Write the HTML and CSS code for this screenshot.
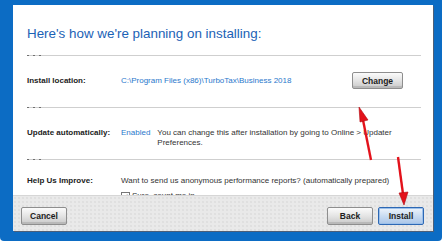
FILE: index.html
```html
<!DOCTYPE html>
<html lang="en">
<head>
	<meta charset="UTF-8">
	<title>TurboTax Install</title>
	<link rel="stylesheet" href="styles.css">
</head>
<body>
	<div class="frame">
		<div class="panel">
			<div class="content">
				<h1 class="title">Here's how we're planning on installing:</h1>
				<div class="row row-location">
					<span class="label">Install location:</span>
					<span class="link">C:\Program Files (x86)\TurboTax\Business 2018</span>
					<button class="btn btn-change">Change</button>
				</div>
				<div class="row row-update">
					<span class="label">Update automatically:</span>
					<div class="value">
						<span class="link">Enabled</span>
						<span class="desc">You can change this after installation by going to Online &gt; Updater Preferences.</span>
					</div>
				</div>
				<div class="row row-improve">
					<span class="label">Help Us Improve:</span>
					<div class="value-col">
						<span>Want to send us anonymous performance reports? (automatically prepared)</span>
						<label class="check"><span class="box">&#10003;</span>Sure, count me in</label>
					</div>
				</div>
			</div>
			<div class="footer">
				<button class="btn">Cancel</button>
				<button class="btn btn-back">Back</button>
				<button class="btn btn-primary">Install</button>
			</div>
		</div>
	</div>
	<svg class="arrows" width="442" height="246" viewBox="0 0 442 246">
		<g fill="#e3121b" stroke="#b00a10" stroke-width="0.6">
			<line x1="371" y1="160" x2="363" y2="120" stroke="#e3121b" stroke-width="2.4"/>
			<polygon points="359,107 368,120 360,122"/>
			<line x1="398" y1="157" x2="403" y2="194" stroke="#e3121b" stroke-width="2.4"/>
			<polygon points="404,205 399,193 408,192"/>
		</g>
	</svg>
</body>
</html>
```
FILE: styles.css
```css
body{margin: 0;background: #fff;position: relative;font: 8px/10px "Liberation Sans", Arial, sans-serif;color: #333;}
.frame{width: 442px;height: 241px;box-sizing: border-box;padding: 5px 9px 10px 13px;background: #0c6cc4;border-radius: 0 0 4px 4px;}
.panel{width: 420px;height: 226px;background: #fff;display: flex;flex-direction: column;box-shadow: 1px 1px 0 #4d5f78;}
.content{height: 190px;overflow: hidden;padding: 21px 12px 0 14px;box-sizing: border-box;}
.title{margin: 0 0 13px;font: 13.4px/16px "Liberation Sans", Arial, sans-serif;color: #1b62b6;}
.row{position: relative;border-top: 1px solid #cfcfcf;display: grid;grid-template-columns: 94px 1fr auto;align-items: center;}
.row::before{content: "";position: absolute;top: -1px;left: 0;width: 17px;height: 1px;background: repeating-linear-gradient(90deg, #6f6f6f 0 2px, transparent 2px 6px);}
.label{font-weight: bold;color: #222;}
.link{color: #2a78cc;}
.row-location{padding: 16px 0 18px;}
.row-update{padding: 20px 0 11px;align-items: start;}
.row-improve{padding: 16px 0 0;align-items: start;}
.value{display: flex;gap: 7px;}
.desc{width: 250px;}
.value-col{display: flex;flex-direction: column;gap: 5px;}
.check{display: flex;align-items: center;gap: 2px;}
.box{width: 7px;height: 7px;border: 1px solid #777;font-size: 7px;line-height: 7px;text-align: center;color: #333;}
.btn{width: 46px;height: 18px;padding: 0;border: 1px solid #8e8e8e;border-radius: 2px;background: linear-gradient(#fbfbfb, #e4e4e4 50%, #c9c9c9);box-shadow: inset 0 -2px 0 #b9b9b9;font: bold 8.5px "Liberation Sans", Arial, sans-serif;color: #1c1c1c;}
.btn-change{width: 51px;height: 17px;margin-right: 18px;}
.footer{flex: 1;display: flex;gap: 5px;padding: 11px 9px 0 8px;border-top: 1px solid #d6d6d6;background: #e9e9e9 radial-gradient(#d4d4d4 0.6px, transparent 0.8px) 0 0/4px 4px;}
.btn-back{margin-left: auto;}
.btn-primary{border-color: #2d68b4;background: linear-gradient(#eef4fb, #c9dcf2 50%, #a9c5e8);box-shadow: inset 0 0 0 1px #9cc0ea;}
.arrows{position: absolute;top: 0;left: 0;pointer-events: none;}
```
